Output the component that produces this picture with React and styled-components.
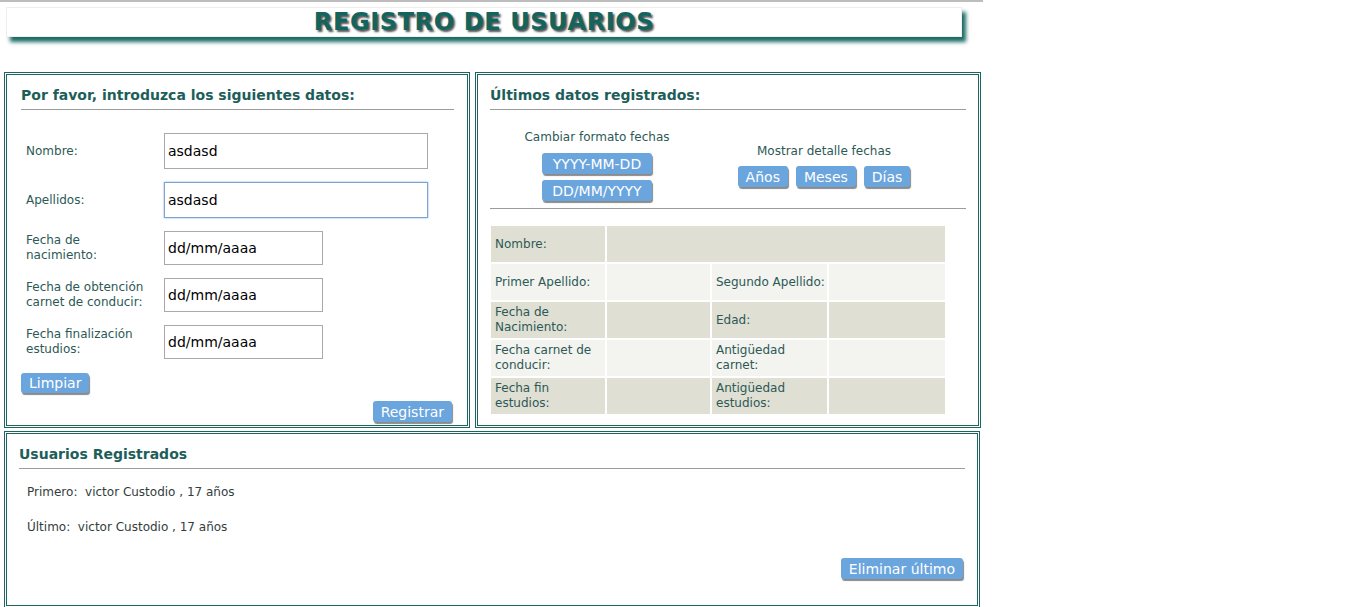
import React from "react";
import styled, { createGlobalStyle } from "styled-components";

const GlobalStyle = createGlobalStyle`
  html, body { margin: 0; padding: 0; background: #ffffff; }
  body {
    font-family: "DejaVu Sans", Verdana, sans-serif;
    font-size: 12px;
    color: #2c5956;
  }
  * { box-sizing: border-box; }
`;

const Page = styled.div`
  width: 983px;
  border-top: 2px solid #bdbdbd;
`;

const Banner = styled.header`
  margin: 5px 0 0 6px;
  width: 956px;
  height: 30px;
  background: #ffffff;
  box-shadow: 4px 5px 4px #1d6b66;
  border: 1px solid #eeeeee;
  display: flex;
  align-items: center;
  justify-content: center;
`;

const Title = styled.h1`
  margin: 0;
  font-family: "DejaVu Sans", Verdana, sans-serif;
  font-size: 24px;
  font-weight: bold;
  letter-spacing: 0.6px;
  color: #14645e;
  text-shadow: 2px 2px 2px #555555;
  line-height: 28px;
`;

const TopRow = styled.div`
  display: flex;
  gap: 5px;
  margin-top: 35px;
  padding-left: 4px;
`;

const Panel = styled.section`
  border: 3px double #1c6661;
  width: ${(p) => p.$w}px;
  height: ${(p) => p.$h}px;
  padding: ${(p) => p.$pad};
  display: flex;
  flex-direction: column;
`;

const BottomPanel = styled(Panel)`
  margin: 3px 0 0 4px;
`;

const Heading = styled.h2`
  margin: 0;
  font-size: 14px;
  font-weight: bold;
  line-height: 17px;
  color: #1d5e5a;
  padding-bottom: 5px;
  border-bottom: 1px solid #9c9c9c;
`;

const Form = styled.div`
  display: flex;
  flex-direction: column;
  gap: 13px;
  margin-top: 23px;
  padding-left: 5px;
`;

const FormRow = styled.div`
  display: flex;
  align-items: center;
`;

const Label = styled.label`
  width: 138px;
  padding-right: 14px;
  line-height: 15px;
  color: #2c5956;
`;

const Input = styled.input`
  width: ${(p) => p.$w}px;
  height: ${(p) => p.$h}px;
  border: 1px solid ${(p) => (p.$focus ? "#7e9fd3" : "#a9a9a9")};
  box-shadow: ${(p) => (p.$focus ? "0 0 2px #8fb0e0" : "none")};
  padding: 0 3px;
  font-family: "DejaVu Sans", Verdana, sans-serif;
  font-size: 14px;
  color: #000000;
  background: #ffffff;
  outline: none;
  &::placeholder { color: #000000; opacity: 1; }
`;

const Button = styled.button`
  height: ${(p) => (p.$tall ? 21 : 20)}px;
  ${(p) => (p.$w ? `width: ${p.$w}px;` : "")}
  padding: 0 8px;
  border: none;
  border-radius: 3px;
  background: #6aa5de;
  color: #ffffff;
  font-family: "DejaVu Sans", Verdana, sans-serif;
  font-size: 14px;
  line-height: 20px;
  box-shadow: 1px 2px 1px #8a8a8a;
  cursor: pointer;
`;

const LeftActions = styled.div`
  display: flex;
  flex-direction: column;
  align-items: flex-start;
  margin-top: 14px;
`;

const RegisterWrap = styled.div`
  align-self: flex-end;
  margin-top: 8px;
  margin-right: 2px;
`;

const Options = styled.div`
  display: grid;
  grid-template-columns: 214px 240px;
  align-items: center;
  padding: 20px 0 7px;
  border-bottom: 1px solid #9c9c9c;
`;

const OptionGroup = styled.div`
  display: flex;
  flex-direction: column;
  align-items: center;
`;

const OptionCaption = styled.div`
  line-height: 15px;
  color: #2c5956;
  margin-bottom: ${(p) => p.$gap}px;
`;

const ButtonStack = styled.div`
  display: flex;
  flex-direction: ${(p) => (p.$row ? "row" : "column")};
  gap: ${(p) => (p.$row ? 8 : 6)}px;
`;

const DataGrid = styled.div`
  margin: 17px 0 0 1px;
  display: grid;
  grid-template-columns: 114px 103px 115px 116px;
  grid-auto-rows: 36px;
  gap: 2px;
  width: 454px;
`;

const Cell = styled.div`
  grid-column: ${(p) => (p.$span ? `span ${p.$span}` : "auto")};
  background: ${(p) => (p.$dark ? "#dfdfd3" : "#f3f3ef")};
  display: flex;
  align-items: center;
  padding-left: 4px;
  line-height: 15px;
  color: #2c5956;
`;

const UserList = styled.div`
  display: flex;
  flex-direction: column;
  gap: 20px;
  margin-top: 16px;
  padding-left: 8px;
`;

const UserLine = styled.div`
  line-height: 15px;
  color: #333d3c;
`;

const BottomActions = styled.div`
  margin-top: auto;
  margin-bottom: 26px;
  align-self: flex-end;
  margin-right: 2px;
`;

const formRows = [
  { label: "Nombre:", value: "asdasd", w: 264, h: 36 },
  { label: "Apellidos:", value: "asdasd", w: 264, h: 36, focus: true },
  { label: "Fecha de nacimiento:", placeholder: "dd/mm/aaaa", w: 159, h: 34 },
  { label: "Fecha de obtención carnet de conducir:", placeholder: "dd/mm/aaaa", w: 159, h: 34 },
  { label: "Fecha finalización estudios:", placeholder: "dd/mm/aaaa", w: 159, h: 34 },
];

const tableRows = [
  [{ t: "Nombre:" }, { t: "", span: 3 }],
  [{ t: "Primer Apellido:" }, { t: "" }, { t: "Segundo Apellido:" }, { t: "" }],
  [{ t: "Fecha de Nacimiento:" }, { t: "" }, { t: "Edad:" }, { t: "" }],
  [{ t: "Fecha carnet de conducir:" }, { t: "" }, { t: "Antigüedad carnet:" }, { t: "" }],
  [{ t: "Fecha fin estudios:" }, { t: "" }, { t: "Antigüedad estudios:" }, { t: "" }],
];

export default function App() {
  return (
    <>
      <GlobalStyle />
      <Page>
        <Banner>
          <Title>REGISTRO DE USUARIOS</Title>
        </Banner>

        <TopRow>
          <Panel $w={466} $h={356} $pad="12px 13px 0 14px">
            <Heading>Por favor, introduzca los siguientes datos:</Heading>
            <Form>
              {formRows.map((r) => (
                <FormRow key={r.label}>
                  <Label>{r.label}</Label>
                  <Input
                    $w={r.w}
                    $h={r.h}
                    $focus={r.focus}
                    defaultValue={r.value}
                    placeholder={r.placeholder}
                  />
                </FormRow>
              ))}
            </Form>
            <LeftActions>
              <Button>Limpiar</Button>
            </LeftActions>
            <RegisterWrap>
              <Button $tall>Registrar</Button>
            </RegisterWrap>
          </Panel>

          <Panel $w={506} $h={356} $pad="12px 12px 0 12px">
            <Heading>Últimos datos registrados:</Heading>
            <Options>
              <OptionGroup>
                <OptionCaption $gap={8}>Cambiar formato fechas</OptionCaption>
                <ButtonStack>
                  <Button $tall $w={110}>YYYY-MM-DD</Button>
                  <Button $tall $w={110}>DD/MM/YYYY</Button>
                </ButtonStack>
              </OptionGroup>
              <OptionGroup>
                <OptionCaption $gap={7}>Mostrar detalle fechas</OptionCaption>
                <ButtonStack $row>
                  <Button $tall>Años</Button>
                  <Button $tall>Meses</Button>
                  <Button $tall>Días</Button>
                </ButtonStack>
              </OptionGroup>
            </Options>
            <DataGrid>
              {tableRows.map((row, i) =>
                row.map((c, j) => (
                  <Cell key={`${i}-${j}`} $dark={i % 2 === 0} $span={c.span}>
                    {c.t}
                  </Cell>
                ))
              )}
            </DataGrid>
          </Panel>
        </TopRow>

        <BottomPanel $w={976} $h={177} $pad="12px 12px 0 12px">
          <Heading>Usuarios Registrados</Heading>
          <UserList>
            <UserLine>Primero:&nbsp; victor Custodio , 17 años</UserLine>
            <UserLine>Último:&nbsp; victor Custodio , 17 años</UserLine>
          </UserList>
          <BottomActions>
            <Button $tall>Eliminar último</Button>
          </BottomActions>
        </BottomPanel>
      </Page>
    </>
  );
}
